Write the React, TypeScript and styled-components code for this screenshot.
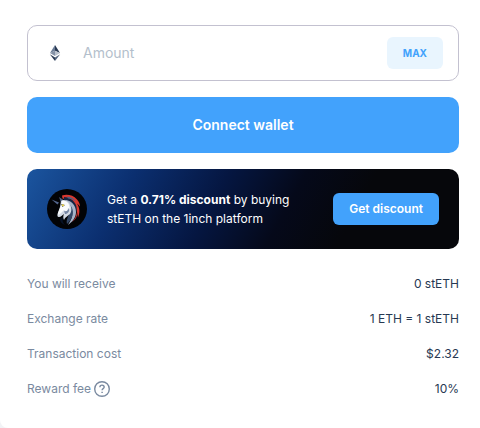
import React from "react";
import styled, { createGlobalStyle } from "styled-components";

const GlobalStyle = createGlobalStyle`
  *, *::before, *::after { box-sizing: border-box; }
  body {
    margin: 0;
    background: #f2f3f6;
    font-family: Inter, "Liberation Sans", sans-serif;
    color: #273852;
  }
  button, input { font-family: inherit; }
`;

const Card = styled.main`
  padding: 25px 21px 29px 27px;
  background: #fff;
  border-bottom-left-radius: 8px;
`;

const Form = styled.form`
  display: flex;
  flex-direction: column;
  gap: 16px;
`;

const AmountField = styled.label`
  display: flex;
  align-items: center;
  height: 56px;
  padding: 0 15px 0 21px;
  border: 1px solid #c3c1d0;
  border-radius: 10px;
`;

const AmountInput = styled.input`
  flex: 1;
  min-width: 0;
  margin-left: 22px;
  padding: 0;
  border: 0;
  outline: 0;
  background: transparent;
  color: #273852;
  font-size: 14px;
  line-height: 20px;
  &::placeholder { color: #b4bfcc; opacity: 1; }
`;

const Button = styled.button`
  border: 0;
  padding: 0 16px 2px;
  background: #42a2fc;
  color: #fff;
  font-weight: 600;
  cursor: pointer;
`;

const MaxButton = styled(Button)`
  height: 32px;
  padding-bottom: 0;
  border-radius: 6px;
  background: #e9f5fe;
  color: #42a2fc;
  font-size: 10px;
  font-weight: 700;
`;

const ConnectButton = styled(Button)`
  height: 56px;
  border-radius: 10px;
  font-size: 14px;
`;

const DiscountButton = styled(Button)`
  flex: none;
  height: 32px;
  border-radius: 6px;
  font-size: 12px;
`;

const Banner = styled.section`
  display: flex;
  align-items: center;
  gap: 20px;
  min-height: 80px;
  padding: 0 20px;
  border-radius: 10px;
  background: linear-gradient(119deg, #1b559f 0%, #0b2f70 23%, #051641 43%, #05091a 59%, #06070b 74%);
  color: #fff;
`;

const BannerText = styled.p`
  flex: 1;
  margin: 0;
  font-size: 12px;
  line-height: 19px;
`;

const BannerLine = styled.span`
  display: block;
`;

const Details = styled.dl`
  display: flex;
  flex-direction: column;
  gap: 15px;
  margin: 25px 0 0;
`;

const DetailRow = styled.div`
  display: flex;
  align-items: center;
  justify-content: space-between;
  font-size: 12px;
  line-height: 20px;
`;

const Term = styled.dt`
  display: flex;
  align-items: center;
  gap: 2px;
  color: #7a8aa0;
`;

const Value = styled.dd`
  margin: 0;
`;

const HelpButton = styled.button`
  display: flex;
  padding: 0;
  border: 0;
  background: none;
  color: inherit;
`;

const EthIcon = () => (
  <svg width="12" height="18" viewBox="0 0 12 18" aria-hidden="true">
    <path d="M6 1 1 9l5-2.3z" fill="#6b7c96" />
    <path d="M6 1v5.7L11 9z" fill="#273852" />
    <path d="M1 9l5-2.3V12z" fill="#8390a5" />
    <path d="M6 6.7 11 9l-5 3z" fill="#b9c1cd" />
    <path d="M.8 10.3 6 13.5V17z" fill="#273852" />
    <path d="M11.2 10.3 6 13.5V17z" fill="#53647e" />
  </svg>
);

const UnicornLogo = () => (
  <svg width="40" height="40" viewBox="0 0 40 40" aria-hidden="true">
    <circle cx="20" cy="20" r="20" fill="#020306" />
    <path d="M4.500 10.500 12 13.500l-1.500 2z" fill="#52658c" />
    <path d="M12 8l4.500 3-2.500 2.500z" fill="#4e5f80" />
    <path d="M15 6.500c5-1.500 11-.5 15 4 2 2 3 5 3 7-1-1-1.500-2-3-3 3 5 3 9 1 14-1-7-2-12-7-15-4-3-6-3.500-8.500-4z" fill="#d9372f" />
    <path d="M17 8c5 0 10 3 12 8 1 3 1 6 0 8-2-7-5-11-12-13z" fill="#152442" />
    <path d="M20 7.500c4 .5 7 2 9 5-3-2-5-3-8-3z" fill="#4e6080" />
    <path d="M18 11c6 0 11 5 11 12 0 6-4 10-8 13 2-4 5-7 4-13-.5-5-3-8-7-12z" fill="#a7b3c8" />
    <path d="M21 14c5 4 6 9 4 14-1 3-3 5-5 7-1-4 1-7 2-10 1-4 0-7-1-11z" fill="#344767" />
    <path d="M14 12c2-2 6-1 8 2 3 4 3 8 1 11-2 2-5 3-6 6-1-2-1-4 0-6-2 1-3 3-5 3-1 .5-2-1-1.500-3l2.500-7z" fill="#d3dae6" />
    <path d="M15 12c3-1 6 1 7 4l1 5-2-2-1 4-3-2-3 3-2.500 2-.5-2 2.500-6z" fill="#fafbfd" />
    <path d="M17 22c3 1 4-1 5-3 1 4-2 6-4 6z" fill="#7585a3" />
    <path d="M14 15l4 1-2.500 2z" fill="#514b28" />
    <path d="M15 15.500h2V17h-2z" fill="#e6cf4c" />
    <path d="M30 23c1 5-2 8-5 10 3-3 4-6 5-10z" fill="#b52f32" />
    <path d="M13 30l3-2c-1 4 0 6 2 8-3-1-5-3-5-6z" fill="#071226" />
  </svg>
);

const HelpIcon = () => (
  <svg width="18" height="18" viewBox="0 0 18 18" fill="none" stroke="currentColor" aria-hidden="true">
    <circle cx="9" cy="9" r="7.300" strokeWidth="1.400" />
    <path d="M6.900 7.300c0-2.900 4.300-2.800 4.300-.2 0 1.500-2.100 1.500-2.100 3.100" strokeWidth="1.400" />
    <path d="M9.100 11.700v1.400" strokeWidth="1.500" />
  </svg>
);

const Detail = ({ label, value, help }: { label: string; value: string; help?: boolean }) => (
  <DetailRow>
    <Term>
      {label}
      {help && (
        <HelpButton type="button" aria-label={`About ${label}`}>
          <HelpIcon />
        </HelpButton>
      )}
    </Term>
    <Value>{value}</Value>
  </DetailRow>
);

export default function App() {
  return (
    <>
      <GlobalStyle />
      <Card>
        <Form onSubmit={(event) => event.preventDefault()}>
          <AmountField>
            <EthIcon />
            <AmountInput placeholder="Amount" aria-label="Amount" inputMode="decimal" />
            <MaxButton type="button">MAX</MaxButton>
          </AmountField>
          <ConnectButton type="submit">Connect wallet</ConnectButton>
          <Banner>
            <UnicornLogo />
            <BannerText>
              <BannerLine>Get a <b>0.71% discount</b> by buying</BannerLine>
              <BannerLine>stETH on the 1inch platform</BannerLine>
            </BannerText>
            <DiscountButton type="button">Get discount</DiscountButton>
          </Banner>
        </Form>
        <Details>
          <Detail label="You will receive" value="0 stETH" />
          <Detail label="Exchange rate" value="1 ETH = 1 stETH" />
          <Detail label="Transaction cost" value="$2.32" />
          <Detail label="Reward fee" value="10%" help />
        </Details>
      </Card>
    </>
  );
}
